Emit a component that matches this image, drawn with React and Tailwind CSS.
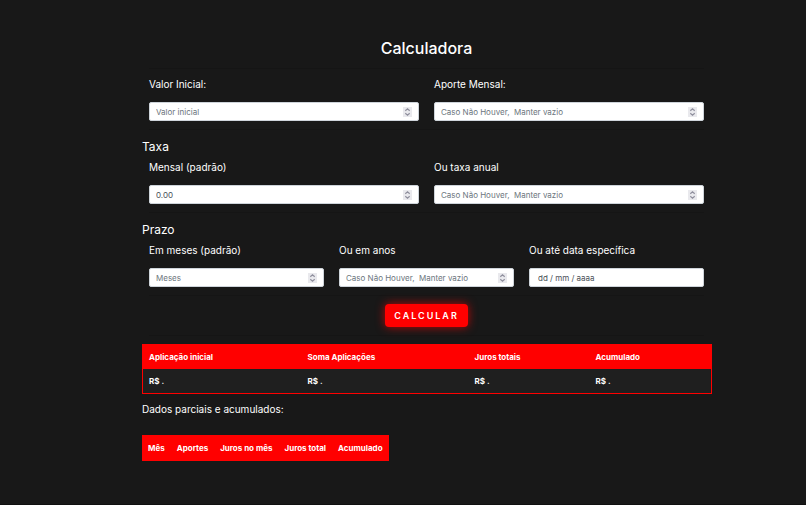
import React from "react";

function Spinner() {
  return (
    <span
      aria-hidden="true"
      className="pointer-events-none absolute right-[7px] top-[5px] flex h-[10px] w-[9px] items-center justify-center bg-[#e9e9ed]"
    >
      <svg viewBox="0 0 9 10" className="h-[10px] w-[9px]" fill="none" stroke="#8f8f9d" strokeWidth="1.2">
        <path d="M2.3 3.8 4.5 1.9l2.2 1.9M2.3 6.2l2.2 1.9 2.2-1.9" />
      </svg>
    </span>
  );
}

function Field({ id, label, type = "number", ...rest }) {
  const isNumber = type === "number";
  return (
    <div>
      <label htmlFor={id} className="block text-[10px] leading-[14px]">
        {label}
      </label>
      <div className="relative mt-[11px]">
        <input
          id={id}
          type={type}
          step="any"
          className={
            "block h-[19px] w-full appearance-none rounded-[2px] border border-[#ced4da] bg-white text-[8px] leading-3 text-[#495057] outline-none placeholder:opacity-100 [&::-webkit-inner-spin-button]:appearance-none " +
            (isNumber ? "px-1.5 placeholder:text-[#6c757d]" : "px-2 placeholder:text-[#495057]")
          }
          {...rest}
        />
        {isNumber && <Spinner />}
      </div>
    </div>
  );
}

function Fields({ three, children }) {
  return (
    <div
      className={
        "mr-2 ml-[7px] grid gap-x-[15px] border-b border-[#151515] pb-2 " +
        (three ? "grid-cols-3" : "grid-cols-2")
      }
    >
      {children}
    </div>
  );
}

const EMPTY = "Caso Não Houver,  Manter vazio";

export default function App() {
  return (
    <main className="min-h-screen border-b border-[#101010] bg-[#181818] pl-12 font-['Inter',sans-serif] text-white">
      <form className="mx-auto max-w-[570px] pt-9" onSubmit={(e) => e.preventDefault()}>
        <h1 className="mr-2 ml-[7px] border-b border-[#151515] pb-2 text-center text-[16px] leading-6 font-medium">
          Calculadora
        </h1>
        <div className="pt-2">
          <Fields>
            <Field id="inicial" label="Valor Inicial:" placeholder="Valor inicial" />
            <Field id="aporte" label="Aporte Mensal:" placeholder={EMPTY} />
          </Fields>
        </div>

        <h2 className="pt-2 pb-1 text-[12px] leading-[18px]">Taxa</h2>
        <Fields>
          <Field id="mensal" label="Mensal (padrão)" defaultValue="0.00" />
          <Field id="anual" label="Ou taxa anual" placeholder={EMPTY} />
        </Fields>

        <h2 className="pt-2 pb-1 text-[12px] leading-[18px]">Prazo</h2>
        <Fields three>
          <Field id="meses" label="Em meses (padrão)" placeholder="Meses" />
          <Field id="anos" label="Ou em anos" placeholder={EMPTY} />
          <Field id="data" label="Ou até data específica" type="text" placeholder="dd / mm / aaaa" />
        </Fields>

        <div className="mr-2 ml-[7px] flex justify-center border-b border-[#151515] py-2">
          <button
            type="submit"
            className="h-[23px] rounded-[4px] bg-[#ff0000] px-[9px] text-[9px] leading-3 font-semibold tracking-[2px] shadow-[0_0_10px_rgba(255,0,0,0.7)]"
          >
            CALCULAR
          </button>
        </div>
      </form>

      <section className="mx-auto max-w-[570px] pt-2">
        <table className="w-full table-fixed border border-[#ff0000] bg-[#1f1f1f] text-left text-[8px] leading-3 font-bold">
          <thead className="bg-[#ff0000]">
            <tr className="h-6">
              <th className="w-[159px] px-1.5">Aplicação inicial</th>
              <th className="w-[167px] px-1.5">Soma Aplicações</th>
              <th className="w-[121px] px-1.5">Juros totais</th>
              <th className="px-1.5">Acumulado</th>
            </tr>
          </thead>
          <tbody>
            <tr className="h-[25px]">
              <td className="px-1.5">R$ .</td>
              <td className="px-1.5">R$ .</td>
              <td className="px-1.5">R$ .</td>
              <td className="px-1.5">R$ .</td>
            </tr>
          </tbody>
        </table>

        <p className="pt-2 text-[10px] leading-[14px]">Dados parciais e acumulados:</p>

        <table className="mt-[19px] bg-[#ff0000] text-left text-[8px] leading-3 font-bold">
          <thead>
            <tr className="h-[26px]">
              <th className="px-1.5">Mês</th>
              <th className="px-1.5">Aportes</th>
              <th className="px-1.5">Juros no mês</th>
              <th className="px-1.5">Juros total</th>
              <th className="px-1.5">Acumulado</th>
            </tr>
          </thead>
        </table>
      </section>
    </main>
  );
}
